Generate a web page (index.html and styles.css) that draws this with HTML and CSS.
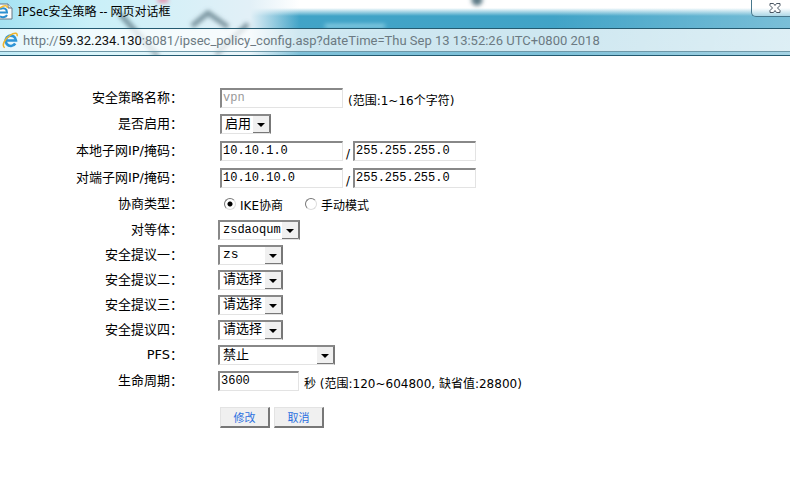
FILE: index.html
```html
<!DOCTYPE html>
<html lang="zh-CN">

<head>
    <meta charset="utf-8">
    <meta name="viewport" content="width=device-width, initial-scale=1.0">
    <title>IPSec安全策略</title>
    <link rel="stylesheet" href="styles.css">
</head>

<body>
    <header class="chrome">
        <div class="titlebar">
            <svg class="page-icon" viewBox="0 0 14 18" aria-hidden="true">
                <path d="M0 1h8l4 4v11H0" fill="#fdfdfd" stroke="#667782" />
                <path d="M8 1v4h4" fill="#d8e4ea" stroke="#667782" />
                <path d="M0 6c4-2 7 0 7 3.500H0M7 12c-1 2-4 3-7 1.500" fill="none" stroke="#2c8fd0" stroke-width="2" />
                <path d="M0 5c4-3 8-3 7 0" fill="none" stroke="#f2bc35" stroke-width="1.500" />
            </svg>
            <h1 class="title">IPSec安全策略 -- 网页对话框</h1>
            <button class="close" type="button" aria-label="关闭">
                <svg viewBox="0 0 12 12" aria-hidden="true">
                    <path d="M1 1.500h3.500L6 3.500l1.500-2H11v2L8.500 6 11 8.500v2H7.500L6 8.500l-1.500 2H1v-2L3.500 6 1 3.500z" fill="#fff" stroke="#4a5663" />
                </svg>
            </button>
        </div>
        <div class="address">
            <svg class="ie-icon" viewBox="0 0 18 18" aria-hidden="true">
                <path d="M14 12.200a5.500 5.500 0 1 1 .8-3.200H4.500" fill="none" stroke="#2e95d6" stroke-width="2.800" />
                <path d="M3 16.500C-1 15 3 7 8.500 3.500 13 .5 17 .5 16 4.500" fill="none" stroke="#efb52c" stroke-width="1.600" />
            </svg>
            <p class="url">http://<span class="host">59.32.234.130</span>:8081/ipsec_policy_config.asp?dateTime=Thu Sep 13 13:52:26 UTC+0800 2018</p>
        </div>
    </header>

    <form class="policy">
        <div class="row indent">
            <label class="name" for="policy">安全策略名称：</label>
            <div class="field">
                <input class="text" id="policy" type="text" value="vpn" disabled>
                <span class="hint">(范围:1~16个字符)</span>
            </div>
        </div>
        <div class="row indent">
            <label class="name" for="enable">是否启用：</label>
            <select class="pick pick-small" id="enable">
                <option>启用</option>
                <option>禁用</option>
            </select>
        </div>
        <div class="row row-ip indent">
            <label class="name" for="local-ip">本地子网IP/掩码：</label>
            <div class="field field-ip">
                <input class="text" id="local-ip" type="text" value="10.10.1.0">
                <span class="hint">/</span>
                <input class="text" type="text" value="255.255.255.0" aria-label="本地子网掩码">
            </div>
        </div>
        <div class="row row-ip indent">
            <label class="name" for="peer-ip">对端子网IP/掩码：</label>
            <div class="field field-ip">
                <input class="text" id="peer-ip" type="text" value="10.10.10.0">
                <span class="hint">/</span>
                <input class="text" type="text" value="255.255.255.0" aria-label="对端子网掩码">
            </div>
        </div>
        <div class="row indent">
            <span class="name">协商类型：</span>
            <div class="modes">
                <label class="mode"><input class="radio" type="radio" name="mode" checked>IKE协商</label>
                <label class="mode"><input class="radio" type="radio" name="mode">手动模式</label>
            </div>
        </div>
        <div class="row row-pick">
            <label class="name" for="peer">对等体：</label>
            <select class="pick pick-peer" id="peer">
                <option>zsdaoqum</option>
            </select>
        </div>
        <div class="row row-pick">
            <label class="name" for="proposal1">安全提议一：</label>
            <select class="pick" id="proposal1">
                <option>zs</option>
            </select>
        </div>
        <div class="row row-pick">
            <label class="name" for="proposal2">安全提议二：</label>
            <select class="pick" id="proposal2">
                <option>请选择</option>
            </select>
        </div>
        <div class="row row-pick">
            <label class="name" for="proposal3">安全提议三：</label>
            <select class="pick" id="proposal3">
                <option>请选择</option>
            </select>
        </div>
        <div class="row row-pick">
            <label class="name" for="proposal4">安全提议四：</label>
            <select class="pick" id="proposal4">
                <option>请选择</option>
            </select>
        </div>
        <div class="row">
            <label class="name" for="pfs">PFS：</label>
            <select class="pick pick-wide" id="pfs">
                <option>禁止</option>
            </select>
        </div>
        <div class="row">
            <label class="name" for="life">生命周期：</label>
            <div class="field">
                <input class="text text-short" id="life" type="text" value="3600">
                <span class="hint">秒 (范围:120~604800, 缺省值:28800)</span>
            </div>
        </div>
        <div class="buttons">
            <button class="btn" type="submit">修改</button>
            <button class="btn" type="reset">取消</button>
        </div>
    </form>
</body>

</html>
```
FILE: styles.css
```css
* {
    box-sizing: border-box;
}

body {
    margin: 0;
    background: #fff;
    color: #000;
    font-family: "DejaVu Sans", "Noto Sans CJK SC", sans-serif;
    font-size: 13px;
}

/* window frame, the desktop shines through the glass */
.chrome {
    font-family: "Noto Sans", "Noto Sans CJK SC", sans-serif;
    font-size: 12px;
    background:
        url("data:image/svg+xml,%3Csvg xmlns='http://www.w3.org/2000/svg' width='560' height='56'%3E%3Cdefs%3E%3Cfilter id='b' x='-20%25' y='-20%25' width='140%25' height='140%25'%3E%3CfeGaussianBlur stdDeviation='2'/%3E%3C/filter%3E%3C/defs%3E%3Cg filter='url(%23b)' fill='none' stroke='%23587682' stroke-width='5'%3E%3Cpath d='M120 14l18 20 20 22M192 26l16-13 20 14M248 24l-32 30' stroke-opacity='.75'/%3E%3Ccircle cx='477' cy='0' r='3'/%3E%3Cpath d='M158 0h10' stroke='%23e58ba8'/%3E%3Cpath d='M325 26h60' stroke='%239fdcec' stroke-width='3'/%3E%3C/g%3E%3C/svg%3E") no-repeat,
        linear-gradient(90deg, #a5e2f2, #c9f0f8 90px, #e2f0f7 250px, transparent 300px),
        linear-gradient(90deg, transparent 70%, rgba(255, 255, 255, .3)),
        linear-gradient(#fff 8px, #40a3c7 16px, #46a5c7 56px);
}

.titlebar {
    display: flex;
    justify-content: space-between;
    height: 28px;
}

.page-icon {
    width: 14px;
    height: 18px;
    margin-top: 3px;
}

.title {
    flex: 1;
    margin: 0 0 0 4px;
    font-size: 12px;
    font-weight: normal;
    line-height: 24px;
}

.close {
    width: 39px;
    height: 17px;
    padding: 0 0 0 8px;
    border: 1px solid #47788d;
    border-top: 0;
    border-right: 0;
    border-radius: 0 0 0 5px;
    background: rgba(255, 255, 255, .4);
}

.close svg {
    display: block;
    width: 12px;
    height: 12px;
    margin: 0 auto;
}

.address {
    display: flex;
    align-items: center;
    gap: 4px;
    height: 28px;
    padding: 0 2px 3px;
    border-top: 1px solid #245a70;
    border-bottom: 1px solid #245a70;
    background: linear-gradient(rgba(255, 255, 255, .74) 22px, #6e98a8 22px, #6e98a8 23px, rgba(255, 255, 255, .3) 23px);
}

.ie-icon {
    width: 17px;
    height: 17px;
}

.url {
    margin: 0;
    color: #6c7a82;
    font-family: Roboto, sans-serif;
    font-size: 13px;
    white-space: nowrap;
}

.host {
    color: #111;
}

/* form */
.policy {
    padding-top: 29px;
}

.row {
    display: flex;
    align-items: center;
    gap: 35px;
    min-height: 26px;
}

.row-ip {
    min-height: 27px;
}

.row-pick {
    min-height: 25px;
}

.indent {
    gap: 37px;
}

.name {
    width: 183px;
    text-align: right;
    line-height: 20px;
    white-space: nowrap;
}

.field {
    display: flex;
    align-items: flex-end;
    gap: 5px;
}

.field-ip {
    gap: 3px;
}

.hint {
    font-size: 12px;
    line-height: 14px;
    white-space: nowrap;
}

.text,
.pick {
    height: 20px;
    border: 1px solid #e3e3e3;
    border-top: 2px solid #888;
    border-left: 2px solid #888;
    border-radius: 0;
    background: #fff;
    color: #000;
    font-family: "Liberation Mono", "Noto Sans CJK SC", monospace;
    font-size: 12px;
}

.text {
    width: 123px;
    padding: 0 1px 1px;
}

.text:disabled {
    color: #999;
}

.text-short {
    width: 81px;
}

.pick {
    appearance: none;
    width: 65px;
    padding: 0 17px 0 3px;
    border-right-color: #777;
    font-size: 13px;
    line-height: 16px;
    background: #fff url("data:image/svg+xml,%3Csvg xmlns='http://www.w3.org/2000/svg' width='17' height='17'%3E%3Cpath fill='%23f0f0f0' d='M0 0h17v17H0z'/%3E%3Cpath fill='none' stroke='%23777' d='M16.500 0v16.500H0'/%3E%3Cpath d='M4 7h8L8 11z'/%3E%3C/svg%3E") right center no-repeat;
}

.pick-small {
    width: 51px;
}

.pick-peer {
    width: 82px;
    font-size: 12px;
}

.pick-wide {
    width: 117px;
}

.modes {
    display: flex;
    gap: 22px;
    padding-left: 4px;
    font-size: 12px;
}

.mode {
    display: flex;
    align-items: center;
    gap: 4px;
}

.radio {
    appearance: none;
    width: 12px;
    height: 12px;
    margin: 0;
    border: 1px solid #ddd;
    border-top-color: #777;
    border-left-color: #777;
    border-radius: 50%;
}

.radio:checked {
    background: radial-gradient(circle, #000 2px, #fff 3px);
}

.buttons {
    display: flex;
    gap: 4px;
    padding: 13px 0 20px 220px;
}

.btn {
    width: 50px;
    height: 21px;
    padding: 0;
    border: 1px solid #e3e3e3;
    border-right: 2px solid #777;
    border-bottom: 2px solid #777;
    background: #f0f0f0;
    color: #2a6fe0;
    font-family: "Noto Sans CJK SC", sans-serif;
    font-size: 11px;
    line-height: 16px;
}
```
